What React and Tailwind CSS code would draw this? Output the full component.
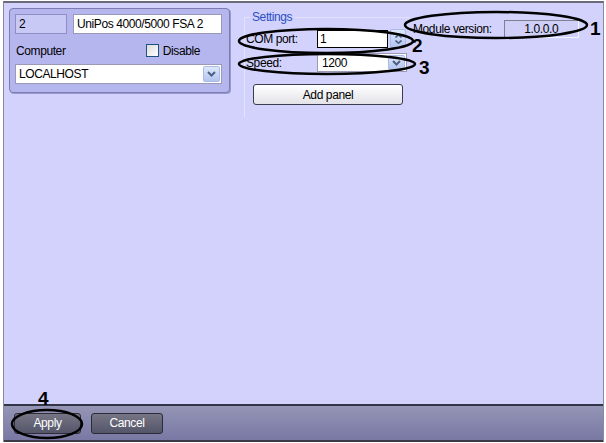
import React from 'react';

const font = { fontFamily: '"Liberation Sans", Arial, sans-serif' };

function ChevronBtn() {
  return (
    <div className="w-[17px] h-full flex items-center justify-center bg-gradient-to-b from-[#dfe8fb] to-[#b3c4ef] border border-[#a9bbe6] rounded-[2px]">
      <svg width="9" height="6" viewBox="0 0 9 6">
        <path d="M1 1 L4.5 4.5 L8 1" fill="none" stroke="#4d6185" strokeWidth="2" />
      </svg>
    </div>
  );
}

function SpinBtn() {
  return (
    <div className="w-[16px] h-[19px] flex flex-col items-center justify-center gap-[2px] bg-gradient-to-b from-[#dfe8fb] to-[#b3c4ef] border border-[#a9bbe6] rounded-[2px]">
      <svg width="7" height="4" viewBox="0 0 7 4"><path d="M0.5 3.5 L3.5 0.8 L6.5 3.5" fill="none" stroke="#4d6185" strokeWidth="1.6" /></svg>
      <svg width="7" height="4" viewBox="0 0 7 4"><path d="M0.5 0.5 L3.5 3.2 L6.5 0.5" fill="none" stroke="#4d6185" strokeWidth="1.6" /></svg>
    </div>
  );
}

export default function App() {
  return (
    <div className="w-[606px] h-[443px] bg-white pl-[3px] pt-[1px] pr-[2px] text-[12px] tracking-[-0.4px] text-black" style={font}>
      <div className="relative w-full h-[441px] flex flex-col border-t-2 border-t-[#6a6a7a] border-l border-l-[#8a8a9a] border-r border-r-[#8a8a9a] bg-[#d2d2fc]">
        {/* content */}
        <div className="flex-1 flex items-start pt-[5px] pl-[5px]">
          {/* object panel */}
          <div className="w-[221px] h-[85px] rounded-[4px] border border-[#7c7cb0] bg-[#b6b6ee] shadow-[1px_1px_0_#9a9ad0] pl-[5px] pr-[7px] pt-[5px]">
            <div className="flex gap-[6px] h-[20px]">
              <div className="w-[52px] h-full border border-[#8e8ec4] bg-[#c9c9f6] px-[3px] flex items-center">2</div>
              <div className="flex-1 h-full border border-[#9a9ab8] bg-white px-[3px] flex items-center">UniPos 4000/5000 FSA 2</div>
            </div>
            <div className="flex items-center h-[30px] pl-[1px] pt-[3px]">
              <span>Computer</span>
              <div className="ml-auto mr-[22px] flex items-center gap-[4px]">
                <div className="w-[13px] h-[13px] border border-[#1c5180] bg-gradient-to-br from-[#dcdcdc] to-white" />
                <span>Disable</span>
              </div>
            </div>
            <div className="h-[20px] border border-[#9a9ab8] bg-white flex items-center pl-[3px] pr-[1px] py-[1px]">
              <span className="flex-1">LOCALHOST</span>
              <ChevronBtn />
            </div>
          </div>

          {/* settings group */}
          <div className="relative ml-[14px] mt-[9px] w-[166px] h-[100px] border-t border-l border-[#e2e2fd]">
            <span className="absolute -top-[8px] left-[5px] px-[2px] bg-[#d2d2fc] text-[#2b4fc2] leading-[14px]">Settings</span>
            <div className="pt-[11px] pl-[1px]">
              <div className="flex items-center h-[19px]">
                <span className="w-[71px]">COM port:</span>
                <div className="w-[71px] h-[18px] border border-black bg-white px-[2px] flex items-center leading-none">1</div>
                <div className="ml-[2px]"><SpinBtn /></div>
              </div>
              <div className="flex items-center h-[19px] mt-[5px]">
                <span className="w-[71px]">Speed:</span>
                <div className="w-[90px] h-[19px] border border-[#9a9ab8] bg-white flex items-center pl-[4px] pr-[1px] py-[1px]">
                  <span className="flex-1">1200</span>
                  <ChevronBtn />
                </div>
              </div>
              <button className="ml-[7px] mt-[12px] w-[150px] h-[21px] rounded-[3px] border border-[#3c3c50] bg-gradient-to-b from-white to-[#e2e2e8] text-[12px] tracking-[-0.4px] flex items-center justify-center" style={font}>Add panel</button>
            </div>
          </div>

          {/* module version */}
          <div className="ml-[3px] mt-[12px] flex items-center">
            <span>Module version:</span>
            <div className="ml-[12px] w-[75px] h-[18px] border border-t-[#808090] border-l-[#808090] border-r-[#f4f4ff] border-b-[#f4f4ff] bg-[#cfcff8] flex items-center justify-center">1.0.0.0</div>
          </div>
        </div>

        {/* bottom bar */}
        <div className="h-[38px] border-t-2 border-t-[#343448] border-b-2 border-b-[#3a3a48] bg-gradient-to-b from-[#9595b6] to-[#7978a4] flex items-center gap-[10px] pl-[10px]">
          <button className="w-[67px] h-[21px] rounded-[3px] border border-[#2c2c38] bg-gradient-to-b from-[#757585] to-[#55556a] text-white text-[12px] tracking-[-0.4px] flex items-center justify-center" style={font}>Apply</button>
          <button className="w-[72px] h-[21px] rounded-[3px] border border-[#2c2c38] bg-gradient-to-b from-[#757585] to-[#55556a] text-white text-[12px] tracking-[-0.4px] flex items-center justify-center" style={font}>Cancel</button>
        </div>

        {/* annotation callouts */}
        <svg className="absolute -left-[3px] -top-[1px] pointer-events-none" width="606" height="443" viewBox="0 0 606 443">
          <g fill="none" stroke="#000" strokeWidth="2.5">
            <ellipse cx="495" cy="23" rx="91" ry="13" />
            <ellipse cx="325" cy="39" rx="87" ry="12" />
            <ellipse cx="326" cy="62" rx="88" ry="10" />
            <ellipse cx="46" cy="422" rx="35" ry="14" />
          </g>
          <g fontFamily="Liberation Sans, Arial, sans-serif" fontWeight="bold" fontSize="19" fill="#000">
            <text x="589" y="33">1</text>
            <text x="411" y="50">2</text>
            <text x="418" y="72">3</text>
            <text x="37" y="403">4</text>
          </g>
        </svg>
      </div>
    </div>
  );
}
